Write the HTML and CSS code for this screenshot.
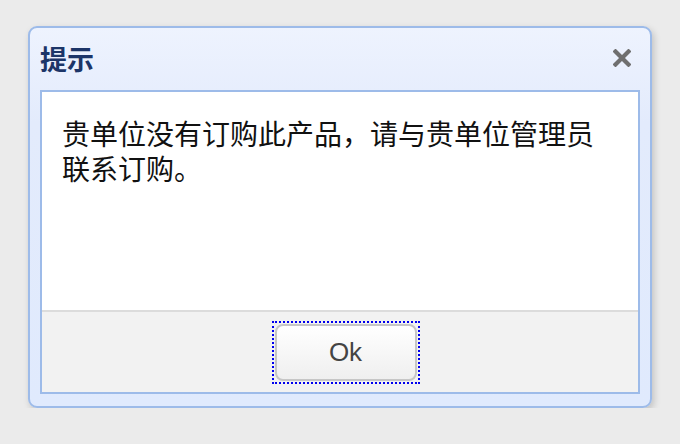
FILE: index.html
```html
<!DOCTYPE html>
<html lang="zh-CN">
<head>
<meta charset="utf-8">
<title>提示</title>
<link rel="stylesheet" href="styles.css">
</head>
<body>
<div class="dialog">
  <div class="header">
    <span class="title">提示</span>
    <svg class="close" width="18" height="18" viewBox="0 0 18 18" aria-label="关闭">
      <path d="M2.5 2.5 L15.5 15.5 M15.5 2.5 L2.5 15.5" stroke="#6f6f6f" stroke-width="4.2" stroke-linecap="square" fill="none"/>
    </svg>
  </div>
  <div class="panel">
    <div class="body">贵单位没有订购此产品，请与贵单位管理员联系订购。</div>
    <div class="footer">
      <span class="focus"><button class="btn" type="button">Ok</button></span>
    </div>
  </div>
</div>
</body>
</html>
```

FILE: styles.css
```css
html, body {
  margin: 0;
  padding: 0;
  background: #ebebeb;
}
body {
  padding: 26px 0 0 28px;
  font-family: "Noto Sans CJK SC", "Noto Sans", sans-serif;
}
.dialog {
  width: 620px;
  border: 2px solid #9dbbe9;
  border-radius: 9px;
  background: linear-gradient(#eef3fe 0%, #e3ebfc 25%, #e0eafd 100%);
  box-shadow: 2px 3px 7px rgba(0, 0, 0, 0.18);
  padding-bottom: 12px;
}
.header {
  height: 62px;
  display: flex;
  align-items: center;
  justify-content: space-between;
  padding: 0 19px 0 10px;
}
.title {
  font-size: 27px;
  font-weight: bold;
  color: #1c3568;
  line-height: 1;
  margin-top: -2px;
}
.close {
  display: block;
  margin-top: -3px;
}
.panel {
  margin: 0 10px;
  border: 2px solid #9dbbe9;
}
.body {
  background: #fff;
  height: 194px;
  padding: 24px 20px 0 20px;
  font-size: 28px;
  line-height: 35px;
  color: #111;
}
.footer {
  height: 80px;
  border-top: 2px solid #dcdcdc;
  background: #f2f2f2;
  display: flex;
  align-items: center;
  justify-content: center;
}
.focus {
  display: block;
  margin-left: 11px;
  padding: 1px;
  border: 2px dotted #0000ee;
}
.btn {
  display: block;
  width: 142px;
  height: 57px;
  border: 2px solid #c6c6c6;
  border-radius: 8px;
  background: linear-gradient(#ffffff, #efefef);
  font-family: "Liberation Sans", Arial, sans-serif;
  font-size: 26px;
  color: #444;
  padding: 0;
  outline: none;
}
```
